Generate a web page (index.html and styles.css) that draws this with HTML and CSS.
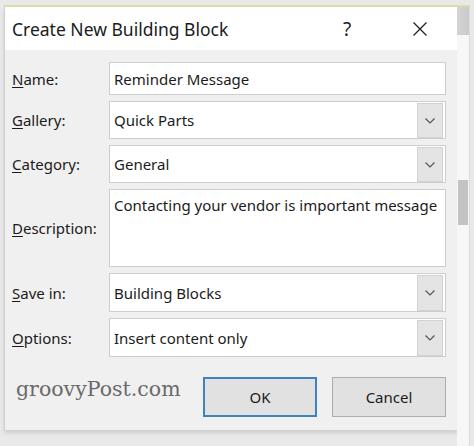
FILE: index.html
```html
<!DOCTYPE html>
<html>
<head>
<meta charset="utf-8">
<link rel="stylesheet" href="styles.css">
</head>
<body>
<div class="screen">
  <div class="dialog">
    <div class="titlebar">
      <span class="title">Create New Building Block</span>
      <span class="help">?</span>
      <span class="close">
        <svg width="14" height="14" viewBox="0 0 14 14"><path d="M0.5 0.5 L13.5 13.5 M13.5 0.5 L0.5 13.5" stroke="#222" stroke-width="1.3" fill="none"/></svg>
      </span>
    </div>
    <div class="body">
      <div class="form">
        <label class="label"><u>N</u>ame:</label>
        <div class="field f-name"><span class="val">Reminder Message</span></div>

        <label class="label"><u>G</u>allery:</label>
        <div class="field f-drop"><span class="val">Quick Parts</span><span class="dbtn"><svg width="12" height="8" viewBox="0 0 12 8"><path d="M1.5 1.5 L6 6 L10.5 1.5" stroke="#555" stroke-width="1.2" fill="none"/></svg></span></div>

        <label class="label"><u>C</u>ategory:</label>
        <div class="field f-drop"><span class="val">General</span><span class="dbtn"><svg width="12" height="8" viewBox="0 0 12 8"><path d="M1.5 1.5 L6 6 L10.5 1.5" stroke="#555" stroke-width="1.2" fill="none"/></svg></span></div>

        <label class="label"><u>D</u>escription:</label>
        <div class="field f-desc"><span class="val">Contacting your vendor is important message</span></div>

        <label class="label"><u>S</u>ave in:</label>
        <div class="field f-drop"><span class="val">Building Blocks</span><span class="dbtn"><svg width="12" height="8" viewBox="0 0 12 8"><path d="M1.5 1.5 L6 6 L10.5 1.5" stroke="#555" stroke-width="1.2" fill="none"/></svg></span></div>

        <label class="label"><u>O</u>ptions:</label>
        <div class="field f-drop"><span class="val">Insert content only</span><span class="dbtn"><svg width="12" height="8" viewBox="0 0 12 8"><path d="M1.5 1.5 L6 6 L10.5 1.5" stroke="#555" stroke-width="1.2" fill="none"/></svg></span></div>
      </div>
      <div class="footer">
        <span class="brand">groovyPost.com</span>
        <div class="buttons">
          <button class="btn ok">OK</button>
          <button class="btn">Cancel</button>
        </div>
      </div>
    </div>
  </div>
  <div class="scroll">
    <div class="scroll-top"></div>
    <div class="thumb"></div>
  </div>
</div>
</body>
</html>
```

FILE: styles.css
```css
* { box-sizing: border-box; }
html, body { margin: 0; padding: 0; }
body {
  width: 474px;
  height: 446px;
  background: #e9e9e9;
  font-family: "Noto Sans", "Open Sans", sans-serif;
  color: #1b1b1b;
  overflow: hidden;
}
.screen {
  display: flex;
  margin: 5px 0 0 4px;
  border-top: 2px solid #dcdca4;
  width: 466px;
}
.dialog {
  width: 453px;
  height: 423px;
  border-left: 1px solid #cfcfcf;
  background: #f0f0f0;
  display: flex;
  flex-direction: column;
  box-shadow: 0 3px 4px rgba(0,0,0,0.12);
}
.titlebar {
  height: 43px;
  background: #ffffff;
  display: flex;
  align-items: center;
  padding-left: 7px;
}
.title {
  font-size: 17.5px;
  flex: 1;
}
.help {
  font-size: 19px;
  width: 20px;
  margin-right: 50px;
}
.close {
  width: 14px;
  height: 14px;
  margin-right: 30px;
  display: flex;
}
.body {
  flex: 1;
  padding: 12px 10px 0 7px;
  display: flex;
  flex-direction: column;
}
.form {
  display: grid;
  grid-template-columns: 97px 337px;
  grid-template-rows: 33px 38px 38px 78px 39px 39px;
  row-gap: 6px;
}
.label {
  font-size: 15px;
  display: flex;
  align-items: center;
}
.label u { text-decoration-thickness: 1px; text-underline-offset: 2px; }
.field {
  background: #ffffff;
  border: 1px solid #cdcdcd;
  display: flex;
  align-items: center;
  font-size: 15px;
  padding-left: 4px;
}
.f-desc {
  align-items: flex-start;
  padding-top: 5px;
}
.val { white-space: nowrap; }
.f-drop { padding-right: 2px; }
.f-drop .val { flex: 1; }
.dbtn {
  width: 26px;
  align-self: stretch;
  margin: 1px 0 0 0;
  background: #e4e4e4;
  border: 1px solid #d2d2d2;
  display: flex;
  align-items: center;
  justify-content: center;
}
.footer {
  display: flex;
  align-items: center;
  margin-top: 20px;
  height: 40px;
}
.brand {
  font-family: "DejaVu Serif", "Liberation Serif", serif;
  font-size: 20.5px;
  color: #6a6a6a;
  padding-left: 4px;
  flex: 1;
  margin-top: -16px;
}
.buttons {
  display: flex;
  gap: 15px;
  margin-right: 1px;
}
.btn {
  width: 114px;
  height: 40px;
  background: #e1e1e1;
  border: 1px solid #adadad;
  font-family: "Noto Sans", "Open Sans", sans-serif;
  font-size: 15px;
  color: #1b1b1b;
  padding: 0;
}
.btn.ok { border: 2px solid #3d83c2; }
.scroll {
  width: 13px;
  height: 439px;
  background: #f7f7f7;
  border-right: 1px solid #dcdcdc;
  display: flex;
  flex-direction: column;
}
.scroll-top {
  height: 28px;
  background: linear-gradient(to right, #d4d4d4, #c9c9c9);
}
.thumb {
  margin-top: 145px;
  margin-left: 1px;
  width: 10px;
  height: 45px;
  background: #c3c3c3;
}
```
